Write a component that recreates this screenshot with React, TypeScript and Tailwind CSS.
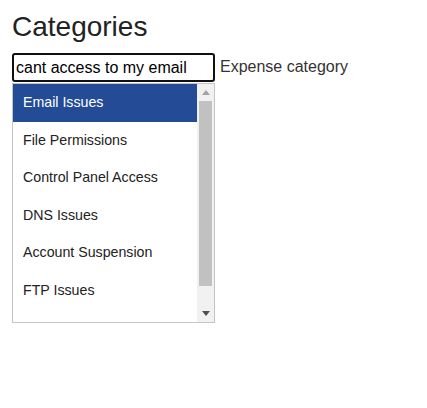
import { useState } from 'react'

const categories = [
  'Email Issues',
  'File Permissions',
  'Control Panel Access',
  'DNS Issues',
  'Account Suspension',
  'FTP Issues',
]

function ScrollArrow({ dir, color }: { dir: 'up' | 'down'; color: string }) {
  return (
    <div className="flex h-[17px] w-[17px] items-center justify-center">
      <svg width="8" height="5" viewBox="0 0 8 5">
        {dir === 'up' ? (
          <polygon points="0,5 8,5 4,0" fill={color} />
        ) : (
          <polygon points="0,0 8,0 4,5" fill={color} />
        )}
      </svg>
    </div>
  )
}

export default function App() {
  const [query, setQuery] = useState('cant access to my email')
  const [active] = useState(0)

  return (
    <div className="min-h-[408px] bg-white px-3 pt-[11px] font-['Liberation_Sans',Arial,sans-serif] text-[#222]">
      <h1 className="text-[28px] leading-[32px] font-normal text-[#222]">Categories</h1>

      <div className="mt-[10px] flex items-start">
        <div className="w-[203px]">
          <input
            autoFocus
            value={query}
            onChange={(e) => setQuery(e.target.value)}
            onFocus={(e) => {
              const len = e.target.value.length
              e.target.setSelectionRange(len, len)
            }}
            className="block h-[29px] w-full rounded-[3px] border-2 border-[#101010] px-[2px] text-[16px] text-black caret-black outline-none"
          />
          <div className="mt-[1px] flex h-[240px] border border-[#c4c4c4] bg-white">
            <ul className="flex-1">
              {categories.map((c, i) => (
                <li
                  key={c}
                  className={
                    i === active
                      ? 'flex h-[37.5px] items-center bg-[#234b96] pl-[10px] text-[14.2px] text-white'
                      : 'flex h-[37.5px] items-center pl-[10px] text-[14.2px] text-[#222]'
                  }
                >
                  {c}
                </li>
              ))}
            </ul>
            <div className="flex w-[17px] flex-col bg-[#f1f1f1]">
              <ScrollArrow dir="up" color="#a3a3a3" />
              <div className="flex-1 px-[2px]">
                <div className="h-[185px] bg-[#c1c1c1]" />
              </div>
              <ScrollArrow dir="down" color="#505050" />
            </div>
          </div>
        </div>
        <span className="ml-[5px] pt-[4px] text-[16px] leading-[20px] text-[#333]">Expense category</span>
      </div>
    </div>
  )
}
